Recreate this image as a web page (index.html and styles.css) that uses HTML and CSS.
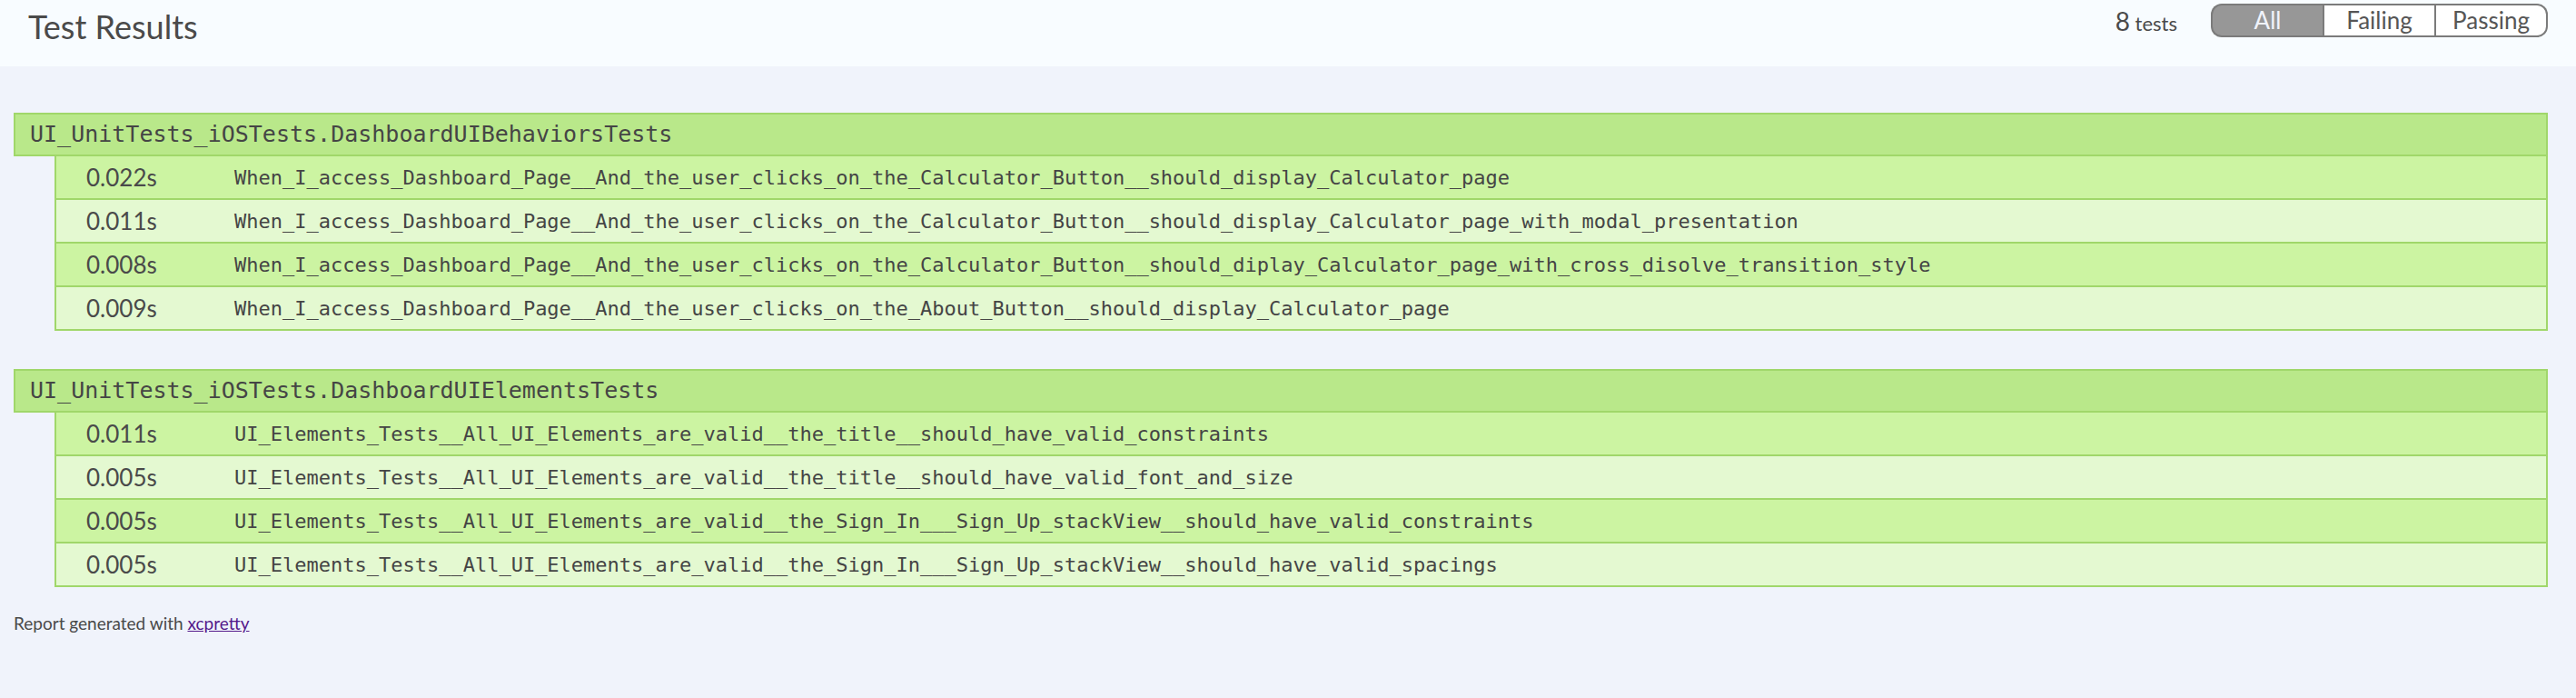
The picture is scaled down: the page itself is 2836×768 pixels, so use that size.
FILE: index.html
```html
<!DOCTYPE html>
<html>
<head>
  <meta charset="UTF-8">
  <meta name="viewport" content="width=device-width, initial-scale=1">
  <title>Test Results | xcpretty</title>
  <link rel="stylesheet" href="styles.css">
</head>
<body>
  <header class="page-header">
    <h1 class="page-title">Test Results</h1>
    <div class="header-right">
      <div class="counters">
        <span class="number">8</span> tests
      </div>
      <div class="segment-bar">
        <a class="segment selected" href="#">All</a>
        <a class="segment" href="#">Failing</a>
        <a class="segment" href="#">Passing</a>
      </div>
    </div>
  </header>

  <div class="test-suites">
    <!-- Behaviors suite -->
    <section class="test-suite passing">
      <h3 class="test-suite__title">UI_UnitTests_iOSTests.DashboardUIBehaviorsTests</h3>
      <div class="tests">
        <div class="test passing">
          <span class="time">0.022s</span>
          <span class="name">When_I_access_Dashboard_Page__And_the_user_clicks_on_the_Calculator_Button__should_display_Calculator_page</span>
        </div>
        <div class="test passing odd">
          <span class="time">0.011s</span>
          <span class="name">When_I_access_Dashboard_Page__And_the_user_clicks_on_the_Calculator_Button__should_display_Calculator_page_with_modal_presentation</span>
        </div>
        <div class="test passing">
          <span class="time">0.008s</span>
          <span class="name">When_I_access_Dashboard_Page__And_the_user_clicks_on_the_Calculator_Button__should_diplay_Calculator_page_with_cross_disolve_transition_style</span>
        </div>
        <div class="test passing odd">
          <span class="time">0.009s</span>
          <span class="name">When_I_access_Dashboard_Page__And_the_user_clicks_on_the_About_Button__should_display_Calculator_page</span>
        </div>
      </div>
    </section>

    <!-- Elements suite -->
    <section class="test-suite passing">
      <h3 class="test-suite__title">UI_UnitTests_iOSTests.DashboardUIElementsTests</h3>
      <div class="tests">
        <div class="test passing">
          <span class="time">0.011s</span>
          <span class="name">UI_Elements_Tests__All_UI_Elements_are_valid__the_title__should_have_valid_constraints</span>
        </div>
        <div class="test passing odd">
          <span class="time">0.005s</span>
          <span class="name">UI_Elements_Tests__All_UI_Elements_are_valid__the_title__should_have_valid_font_and_size</span>
        </div>
        <div class="test passing">
          <span class="time">0.005s</span>
          <span class="name">UI_Elements_Tests__All_UI_Elements_are_valid__the_Sign_In___Sign_Up_stackView__should_have_valid_constraints</span>
        </div>
        <div class="test passing odd">
          <span class="time">0.005s</span>
          <span class="name">UI_Elements_Tests__All_UI_Elements_are_valid__the_Sign_In___Sign_Up_stackView__should_have_valid_spacings</span>
        </div>
      </div>
    </section>
  </div>

  <footer class="page-footer">
    Report generated with <a href="#">xcpretty</a>
  </footer>
</body>
</html>
```

FILE: styles.css
```css
/* Global styles */
body {
  margin: 0;
  background-color: #F0F3FB;
  color: #4A4A4A;
  font-family: 'Lato', 'Avenir Next', 'Helvetica Neue', sans-serif;
}
h1, h3 {
  font-weight: normal;
  margin: 0;
}

/* Header */
.page-header {
  display: flex;
  justify-content: space-between;
  align-items: flex-start;
  height: 73px;
  padding: 0 31px;
  background: #F8FCFF;
}
.page-title {
  font-size: 36px;
  line-height: 1.2;
  margin-top: 8px;
  color: #4A4A4A;
}
.header-right {
  display: flex;
  align-items: center;
  padding-top: 4px;
}
.counters {
  font-size: 22px;
  margin-right: 37px;
  color: #4A4A4A;
}
.counters .number {
  font-size: 28px;
}

/* Segmented control */
.segment-bar {
  display: flex;
}
.segment {
  width: 121px;
  height: 33px;
  line-height: 33px;
  border: 2px solid #7B7B7B;
  background: #FFFFFF;
  color: #565656;
  font-size: 26px;
  text-align: center;
  text-decoration: none;
}
.segment:first-child {
  border-right: none;
  border-radius: 12px 0 0 12px;
}
.segment:last-child {
  border-left: none;
  border-radius: 0 12px 12px 0;
}
.segment.selected {
  background-color: #979797;
  color: #F0F3FB;
}

/* Suites */
.test-suites {
  padding: 51px 31px 0 15px;
}
.test-suite {
  margin-bottom: 42px;
}
.test-suite__title {
  height: 44px;
  line-height: 44px;
  padding-left: 16px;
  background: #B9E88A;
  border: 2px solid #A0D76A;
  font-family: 'DejaVu Sans Mono', monospace;
  font-size: 25px;
  color: #454545;
}
.tests {
  margin-left: 45px;
  border-left: 2px solid #A0D76A;
  border-right: 2px solid #A0D76A;
}
.test {
  display: flex;
  align-items: center;
  height: 46px;
  border-bottom: 2px solid #A0D76A;
  background: #CCF4A2;
}
.test.odd {
  background: #E4F9D1;
}
.test .time {
  box-sizing: border-box;
  width: 196px;
  padding-left: 33px;
  flex-shrink: 0;
  font-size: 26px;
}
.test .name {
  font-family: 'DejaVu Sans Mono', monospace;
  font-size: 22px;
  color: #454545;
  white-space: nowrap;
}

/* Footer */
.page-footer {
  margin: -13px 0 0 15px;
  font-size: 19px;
  line-height: 1.2;
}
.page-footer a {
  color: #551A8B;
}
```
